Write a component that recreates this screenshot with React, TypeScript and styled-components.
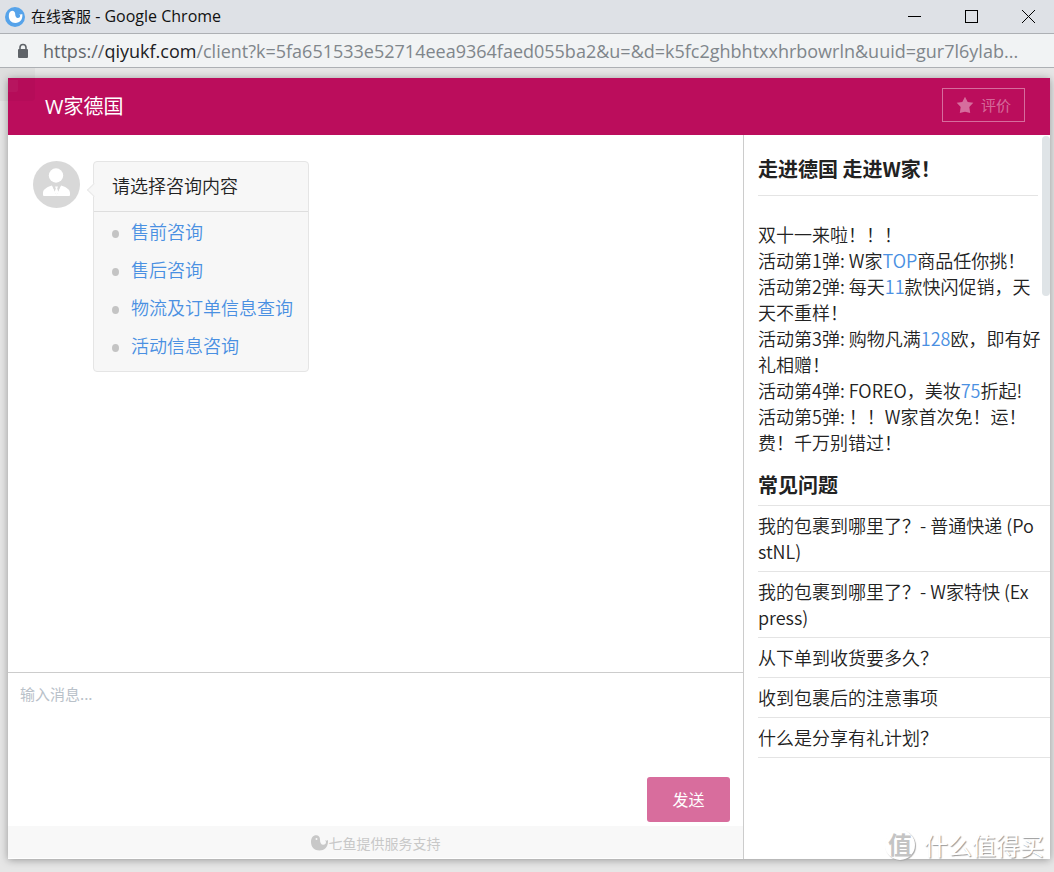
import React from "react";
import styled, { createGlobalStyle } from "styled-components";

const GlobalStyle = createGlobalStyle`
  * { box-sizing: border-box; }
  body {
    margin: 0;
    background: #e6e6e6;
    color: #222;
    font-family: "Noto Sans CJK SC", sans-serif;
    font-size: 18px;
    font-weight: 350;
    line-height: 26px;
  }
  button, textarea { font: inherit; }
`;

const Page = styled.div`
  position: relative;
  display: flex;
  flex-direction: column;
  min-height: 100vh;
`;

const TitleBar = styled.header`
  display: flex;
  align-items: center;
  height: 34px;
  padding: 0 2px 0 5px;
  background: #dee1e6;
  border-bottom: 1px solid #adb0b4;
`;

const WindowTitle = styled.span`
  flex: 1;
  margin: 0 0 2px 6px;
  font-size: 15px;
  font-weight: 400;
  line-height: 24px;
  color: #111;
`;

const BrowserName = styled.span`
  font-family: "Open Sans", sans-serif;
  font-size: 16px;
`;

const WindowControls = styled.div`
  display: flex;
  gap: 9px;
`;

const WindowButton = styled.button`
  display: grid;
  place-items: center;
  width: 48px;
  height: 32px;
  padding: 0;
  border: 0;
  background: transparent;
`;

const AddressBar = styled.div`
  display: flex;
  align-items: center;
  gap: 13px;
  height: 34px;
  padding: 0 16px;
  background: #f1f3f4;
  border-bottom: 1px solid #adb0b4;
`;

const Address = styled.span`
  flex: 1;
  overflow: hidden;
  white-space: nowrap;
  font-family: "Open Sans", sans-serif;
  font-size: 18px;
  font-weight: 400;
  line-height: 28px;
  color: #80868b;
`;

const Scheme = styled.span`
  color: #63676b;
`;

const Host = styled.span`
  color: #202124;
`;

const CornerShade = styled.div`
  position: absolute;
  top: 68px;
  left: 0;
  width: 35px;
  height: 33px;
  padding: 12px 0 0 8px;
  border-radius: 0 0 4px 0;
  background: rgba(0, 0, 0, 0.03);

  &::after {
    content: "";
    display: block;
    width: 10px;
    height: 12px;
    border-radius: 0 0 2px 0;
    background: rgba(255, 255, 255, 0.04);
  }
`;

const ChatWindow = styled.main`
  flex: 1;
  display: flex;
  flex-direction: column;
  margin: 10px 4px 13px 8px;
  background: #fff;
  box-shadow: 0 1px 8px rgba(0, 0, 0, 0.35);
`;

const ChatHeader = styled.div`
  display: flex;
  align-items: center;
  justify-content: space-between;
  height: 57px;
  padding: 0 25px 3px 37px;
  background: #bb0d5c;
`;

const ShopName = styled.h1`
  margin: 4px 0 0;
  font-family: "Open Sans", "Noto Sans CJK SC", sans-serif;
  font-size: 20px;
  font-weight: 400;
  line-height: 28px;
  color: #fff;
`;

const RateButton = styled.button`
  display: flex;
  align-items: center;
  justify-content: center;
  gap: 7px;
  width: 83px;
  height: 34px;
  padding: 0;
  border: 1px solid rgba(255, 255, 255, 0.4);
  background: transparent;
  color: rgba(255, 255, 255, 0.4);
  font-size: 15px;
  font-weight: 400;
  line-height: 24px;
`;

const Columns = styled.div`
  flex: 1;
  display: flex;
`;

const Conversation = styled.section`
  flex: 1;
  display: flex;
  flex-direction: column;
  min-width: 0;
`;

const Messages = styled.div`
  flex: 1;
  display: flex;
  align-items: flex-start;
  gap: 13px;
  padding: 26px 25px;
`;

const Bubble = styled.div`
  position: relative;
  border: 1px solid #e5e5e5;
  border-radius: 4px;
  background: #f7f7f7;

  &::before {
    content: "";
    position: absolute;
    top: 23px;
    left: -5px;
    width: 9px;
    height: 9px;
    border: solid #e9e9e9;
    border-width: 0 0 1px 1px;
    background: #f7f7f7;
    transform: rotate(45deg);
  }
`;

const BubbleTitle = styled.div`
  position: relative;
  padding: 10px 18px 13px;
  border-bottom: 1px solid #dedede;
`;

const Options = styled.ul`
  margin: 0;
  padding: 0 15px 7px 18px;
  list-style: none;
`;

const Option = styled.li`
  display: flex;
  align-items: center;
  gap: 12px;
  height: 38px;

  &::before {
    content: "";
    width: 7px;
    height: 8px;
    margin-top: 6px;
    border-radius: 50%;
    background: #c4c4c4;
  }
`;

const OptionLink = styled.a`
  color: #4a90e2;
  text-decoration: none;
`;

const Composer = styled.form`
  display: flex;
  flex-direction: column;
  align-items: flex-end;
  height: 154px;
  padding: 8px 13px 4px 12px;
  border-top: 1px solid #ccc;
`;

const MessageInput = styled.textarea`
  flex: 1;
  width: 100%;
  padding: 0;
  border: 0;
  outline: 0;
  resize: none;
  background: transparent;
  font-size: 15px;
  font-weight: 400;

  &::placeholder {
    color: #b9c1c9;
    opacity: 1;
  }
`;

const SendButton = styled.button`
  width: 83px;
  height: 45px;
  padding: 0 0 2px;
  border: 0;
  border-radius: 3px;
  background: #d86d9d;
  color: #fff;
  font-size: 16px;
  font-weight: 400;
`;

const Credit = styled.footer`
  display: flex;
  align-items: center;
  justify-content: center;
  gap: 1px;
  height: 32px;
  margin-bottom: 1px;
  padding-top: 2px;
  background: #f8f8f8;
  color: #c8c8c8;
  font-size: 14px;
  font-weight: 400;
`;

const Sidebar = styled.aside`
  position: relative;
  flex: 0 0 307px;
  padding-left: 14px;
  border-left: 1px solid #ccc;
`;

const Scrollbar = styled.div`
  position: absolute;
  top: 1px;
  right: 0;
  width: 8px;
  height: 160px;
  border-radius: 4px;
  background: #dfe4e7;
`;

const SideHeading = styled.h2`
  margin: 0;
  font-size: 20px;
  font-weight: 700;
  line-height: 28px;
`;

const PromoHeading = styled(SideHeading)`
  margin-right: 12px;
  padding: 20px 0 12px;
  border-bottom: 1px solid #e4e4e4;
`;

const Promo = styled.div`
  margin: 25px 8px 16px 0;
`;

const PromoLine = styled.p`
  margin: 0;
  word-break: break-all;
`;

const FaqHeading = styled(SideHeading)`
  padding-bottom: 6px;
  border-bottom: 1px solid #e4e4e4;
`;

const FaqList = styled.ul`
  margin: 0;
  padding: 0;
  list-style: none;
`;

const FaqItem = styled.li`
  padding: 6px 14px 7px 0;
  border-bottom: 1px solid #e4e4e4;
  word-break: break-all;
`;

const FaqLink = styled.a`
  color: inherit;
  text-decoration: none;
`;

const Watermark = styled.div`
  position: absolute;
  right: 10px;
  bottom: 12px;
  display: flex;
  align-items: center;
  gap: 9px;
  color: #fff;
  font-size: 24px;
  font-weight: 400;
  line-height: 30px;
  text-shadow: 1px 1px 1px #999;
`;

const WatermarkSeal = styled.span`
  width: 30px;
  height: 30px;
  border-radius: 50%;
  background: #fff;
  box-shadow: 1px 1px 1px #aaa;
  color: #c4c4c4;
  text-align: center;
  text-shadow: none;
  font-weight: 700;
  line-height: 28px;
`;

const options = ["售前咨询", "售后咨询", "物流及订单信息查询", "活动信息咨询"];

const faqs = [
  "我的包裹到哪里了？- 普通快递 (PostNL)",
  "我的包裹到哪里了？- W家特快 (Express)",
  "从下单到收货要多久？",
  "收到包裹后的注意事项",
  "什么是分享有礼计划？",
];

const promos: { text: string; link?: string; rest?: string }[] = [
  { text: "双十一来啦！！！" },
  { text: "活动第1弹: W家", link: "TOP", rest: "商品任你挑！" },
  { text: "活动第2弹: 每天", link: "11", rest: "款快闪促销，天天不重样！" },
  { text: "活动第3弹: 购物凡满", link: "128", rest: "欧，即有好礼相赠！" },
  { text: "活动第4弹: FOREO，美妆", link: "75", rest: "折起!" },
  { text: "活动第5弹: ！！W家首次免！运！费！千万别错过！" },
];

const FaviconIcon = () => (
  <svg width="20" height="20" viewBox="0 0 20 20" aria-hidden="true">
    <circle cx="10" cy="10" r="10" fill="#56a3ea" />
    <path
      d="M7.200 3.800c1.900 0 3 1.400 3 3.200 0 2.400.9 3.900 2.700 3.900 1.600 0 2.500-1.200 2.200-2.700l-.8-1 1.500.4 1.500-.6c.7 5.200-2.300 9-6.900 9-4.100 0-6.600-2.900-6.600-7 0-3 1.300-5.200 3.400-5.200z"
      fill="#fff"
    />
  </svg>
);

const LockIcon = () => (
  <svg width="14" height="16" viewBox="0 0 14 16" aria-hidden="true">
    <path d="M4 7V4.500a3 3 0 0 1 6 0V7" fill="none" stroke="#5f6368" strokeWidth="1.600" />
    <rect x="2" y="6" width="10" height="9" rx="1" fill="#5f6368" />
  </svg>
);

const StarIcon = () => (
  <svg width="18" height="18" viewBox="0 0 18 18" aria-hidden="true">
    <path
      d="M9 .800l2.700 5.100 5.600.8-4 4.200.9 6L9 15.700l-5.200 1.200.9-6-4-4.200 5.600-.8z"
      fill="currentColor"
    />
  </svg>
);

const AvatarIcon = () => (
  <svg width="47" height="47" viewBox="0 0 47 47" aria-hidden="true">
    <circle cx="23.500" cy="23.500" r="23.500" fill="#d8d8d8" />
    <circle cx="23" cy="14.500" r="7.200" fill="#fff" />
    <path
      d="M10 34v-2c0-3 2.500-5.500 9-7.500L23.500 34 28 24.500c6.500 2 9 4.500 9 7.500v2q0 1-1 1H11q-1 0-1-1z"
      fill="#fff"
    />
    <path d="M19.500 24.500L23.500 34.500 27.500 24.500z" fill="#d8d8d8" />
    <path d="M22 25.500h3l-.8 2 1.200 3.500-1.900 3.500-1.900-3.500 1.200-3.500z" fill="#fff" />
  </svg>
);

const FishIcon = () => (
  <svg width="17" height="16" viewBox="0 0 17 16" aria-hidden="true">
    <path
      d="M5.200.3c2.500 0 3.800 1.900 3.800 4.200 0 3.200 1 5.300 3.300 5.300 2 0 3-1.500 2.600-3.300l-1-1.300 1.500.5 1.500-.8C17.700 11 14 15.500 8.500 15.500 3.500 15.500 0 12 0 7 0 3 2 .3 5.200.3z"
      fill="#c8c8c8"
    />
    <circle cx="5.500" cy="4" r="1" fill="#f8f8f8" />
  </svg>
);

export default function App() {
  return (
    <Page>
      <GlobalStyle />
      <TitleBar>
        <FaviconIcon />
        <WindowTitle>
          在线客服<BrowserName> - Google Chrome</BrowserName>
        </WindowTitle>
        <WindowControls>
          <WindowButton type="button" aria-label="最小化">
            <svg width="13" height="13"><path d="M0 6.500h13" stroke="#000" /></svg>
          </WindowButton>
          <WindowButton type="button" aria-label="最大化">
            <svg width="13" height="13"><rect x=".5" y=".5" width="12" height="12" fill="none" stroke="#000" /></svg>
          </WindowButton>
          <WindowButton type="button" aria-label="关闭">
            <svg width="13" height="13"><path d="M0 0l13 13M13 0L0 13" stroke="#000" /></svg>
          </WindowButton>
        </WindowControls>
      </TitleBar>
      <AddressBar>
        <LockIcon />
        <Address>
          <Scheme>https://</Scheme>
          <Host>qiyukf.com</Host>
          /client?k=5fa651533e52714eea9364faed055ba2&amp;u=&amp;d=k5fc2ghbhtxxhrbowrln&amp;uuid=gur7l6ylab...
        </Address>
      </AddressBar>

      <ChatWindow>
        <ChatHeader>
          <ShopName>W家德国</ShopName>
          <RateButton type="button">
            <StarIcon />
            评价
          </RateButton>
        </ChatHeader>
        <Columns>
          <Conversation>
            <Messages>
              <AvatarIcon />
              <Bubble>
                <BubbleTitle>请选择咨询内容</BubbleTitle>
                <Options>
                  {options.map((label) => (
                    <Option key={label}>
                      <OptionLink href="#">{label}</OptionLink>
                    </Option>
                  ))}
                </Options>
              </Bubble>
            </Messages>
            <Composer>
              <MessageInput aria-label="输入消息" placeholder="输入消息..." />
              <SendButton type="button">发送</SendButton>
            </Composer>
            <Credit>
              <FishIcon />
              七鱼提供服务支持
            </Credit>
          </Conversation>
          <Sidebar>
            <PromoHeading>走进德国 走进W家！</PromoHeading>
            <Promo>
              {promos.map(({ text, link, rest }) => (
                <PromoLine key={text}>
                  {text}
                  {link && <OptionLink href="#">{link}</OptionLink>}
                  {rest}
                </PromoLine>
              ))}
            </Promo>
            <FaqHeading>常见问题</FaqHeading>
            <FaqList>
              {faqs.map((question) => (
                <FaqItem key={question}>
                  <FaqLink href="#">{question}</FaqLink>
                </FaqItem>
              ))}
            </FaqList>
            <Scrollbar />
          </Sidebar>
        </Columns>
      </ChatWindow>
      <CornerShade />
      <Watermark>
        <WatermarkSeal>值</WatermarkSeal>
        什么值得买
      </Watermark>
    </Page>
  );
}
